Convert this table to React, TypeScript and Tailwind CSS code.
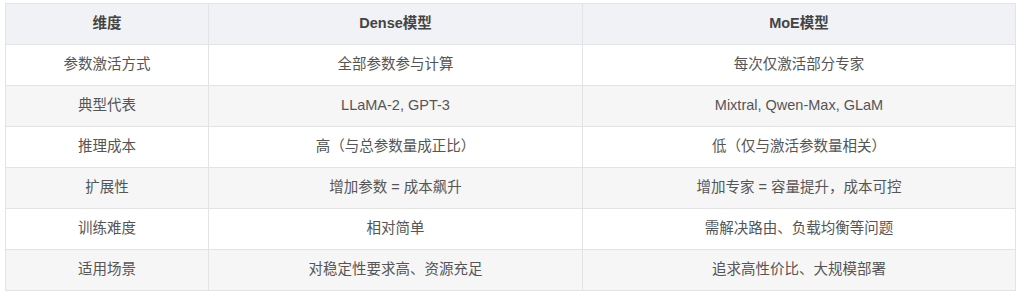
const rows: [string, string, string][] = [
  ["参数激活方式", "全部参数参与计算", "每次仅激活部分专家"],
  ["典型代表", "LLaMA-2, GPT-3", "Mixtral, Qwen-Max, GLaM"],
  ["推理成本", "高（与总参数量成正比）", "低（仅与激活参数量相关）"],
  ["扩展性", "增加参数 = 成本飙升", "增加专家 = 容量提升，成本可控"],
  ["训练难度", "相对简单", "需解决路由、负载均衡等问题"],
  ["适用场景", "对稳定性要求高、资源充足", "追求高性价比、大规模部署"],
];

export default function App() {
  return (
    <div
      className="bg-white pl-[5px] pt-[3px] w-[1024px] h-[300px]"
      style={{ fontFamily: '"Liberation Sans", "Noto Sans CJK SC", sans-serif' }}
    >
      <table className="w-[1010px] border-collapse table-fixed text-[14.5px] text-[#555]">
        <colgroup>
          <col className="w-[203px]" />
          <col className="w-[374px]" />
          <col className="w-[433px]" />
        </colgroup>
        <thead>
          <tr className="bg-[#f0f2f5] h-[41px]">
            <th className="border border-[#e2e4e7] font-bold text-[#444] text-center">维度</th>
            <th className="border border-[#e2e4e7] font-bold text-[#444] text-center">Dense模型</th>
            <th className="border border-[#e2e4e7] font-bold text-[#444] text-center">MoE模型</th>
          </tr>
        </thead>
        <tbody>
          {rows.map((r, i) => (
            <tr key={i} className={`h-[41px] ${i % 2 === 1 ? "bg-[#f6f6f6]" : "bg-white"}`}>
              {r.map((c, j) => (
                <td key={j} className="border border-[#e3e3e3] text-center">
                  {c}
                </td>
              ))}
            </tr>
          ))}
        </tbody>
      </table>
    </div>
  );
}
